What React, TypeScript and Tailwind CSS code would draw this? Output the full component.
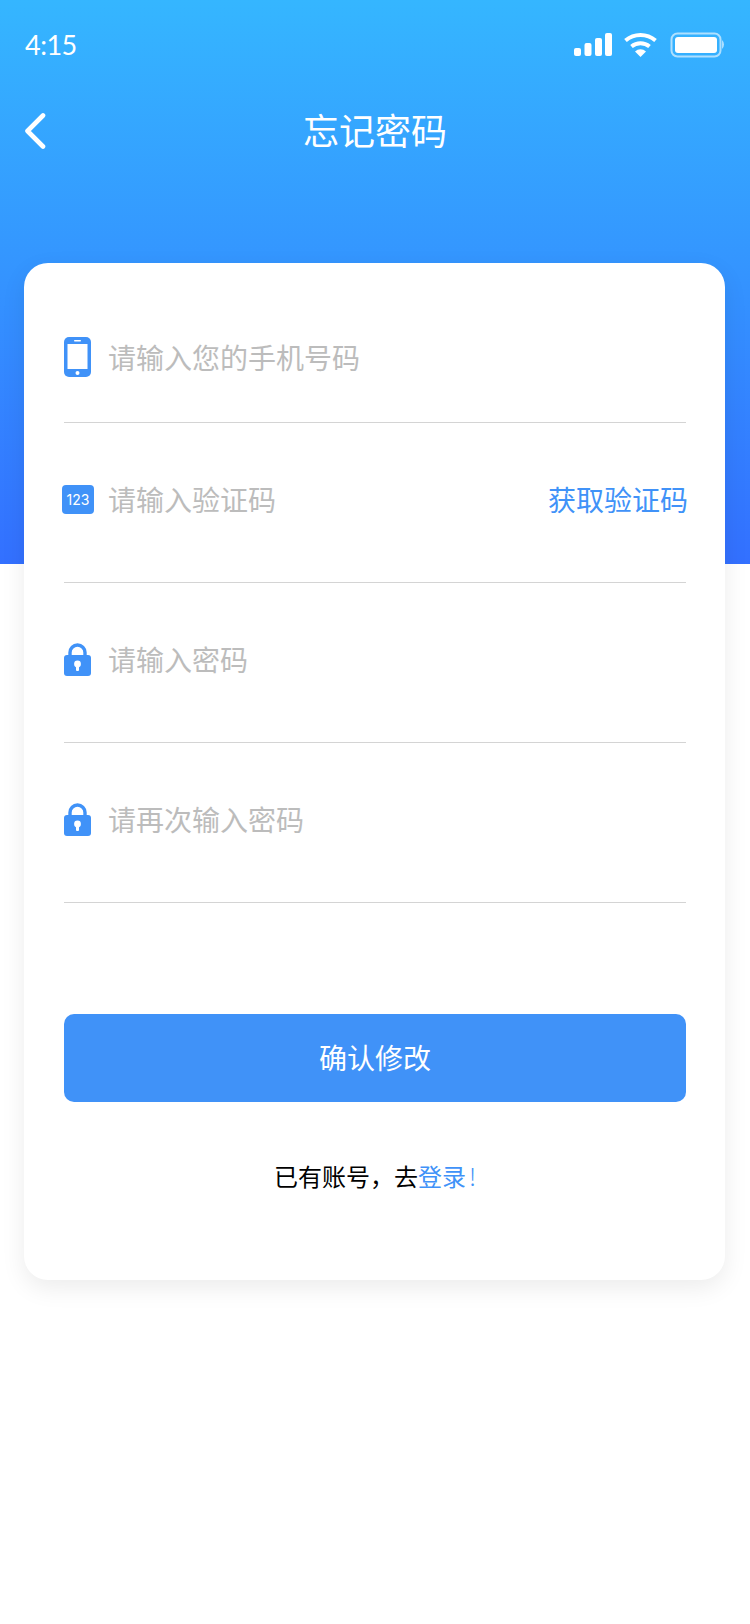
const cjk = "font-['Noto_Sans_CJK_SC',sans-serif]";

function PhoneIcon() {
    return (
        <svg width="28" height="40" viewBox="0 0 28 40" className="mt-[-1px]">
            <rect width="27" height="40" rx="5" fill="#4092f8" />
            <rect x="3.5" y="7" width="20" height="25" fill="#fff" />
            <rect x="10" y="3" width="7" height="1.5" rx="0.7" fill="#fff" />
            <circle cx="13.5" cy="36" r="2" fill="#fff" />
        </svg>
    );
}

function CodeIcon() {
    return (
        <div className="mt-[1px] flex h-[29px] w-[32px] items-center justify-center rounded-[4px] bg-[#4092f8] font-['Inter',sans-serif] text-[14px] text-white">
            123
        </div>
    );
}

function LockIcon() {
    return (
        <svg width="27" height="34" viewBox="0 0 27 34" className="mt-[1px]">
            <path d="M6 14V9.5a7.5 7.5 0 0 1 15 0V14" fill="none" stroke="#4092f8" strokeWidth="3.4" />
            <rect y="12" width="27" height="21" rx="3" fill="#4092f8" />
            <circle cx="13.5" cy="21" r="3.4" fill="#fff" />
            <rect x="12" y="22" width="3" height="6" rx="1" fill="#fff" />
        </svg>
    );
}

function Field({ icon, placeholder, action, pad }: { icon: React.ReactNode; placeholder: string; action?: string; pad: string }) {
    return (
        <div className={`flex h-[160px] items-start border-b border-[#d4d4d4] ${pad}`}>
            <div className="flex h-[40px] w-[44px] items-center">{icon}</div>
            <span className="text-[28px] leading-[40px] font-normal text-[#bcbcbc]">{placeholder}</span>
            {action && <span className="ml-auto mr-[-2px] text-[28px] leading-[40px] font-normal text-[#4092f8]">{action}</span>}
        </div>
    );
}

export default function App() {
    return (
        <div className={`relative min-h-[1624px] bg-white ${cjk}`}>
            <div className="h-[564px] bg-[linear-gradient(180deg,#35b6ff,#3370ff)] text-white">
                <div className="flex h-[90px] items-center justify-between px-[24px]">
                    <span className="ml-[1px] font-['Lato',sans-serif] text-[27px] tracking-[-0.5px]">4:15</span>
                    <svg width="152" height="28" viewBox="0 0 152 28" fill="#fff" className="mt-[-2px]">
                        <rect x="0" y="18" width="7" height="8" rx="2" />
                        <rect x="10.5" y="13" width="7" height="13" rx="2" />
                        <rect x="21" y="8" width="7" height="18" rx="2" />
                        <rect x="31" y="3" width="7" height="23" rx="2" />
                        <path d="M51.5 10.5A23 23 0 0 1 81.5 10.5" fill="none" stroke="#fff" strokeWidth="4" />
                        <path d="M57.5 16.5A14 14 0 0 1 75.5 16.5" fill="none" stroke="#fff" strokeWidth="4" />
                        <path d="M66.5 27l-5.5-5.5a8 8 0 0 1 11 0z" />
                        <rect x="97.5" y="3.5" width="49" height="23" rx="6" fill="none" stroke="#fff" strokeOpacity="0.6" strokeWidth="2" />
                        <rect x="101" y="7" width="42" height="16" rx="3" />
                        <path d="M148 10a6 6 0 0 1 0 9z" fillOpacity="0.6" />
                    </svg>
                </div>
                <div className="relative flex h-[82px] items-center justify-center">
                    <svg width="22" height="36" viewBox="0 0 22 36" className="absolute left-[24px] top-[23px]">
                        <path d="M19 2.5L3.5 18 19 33.5" fill="none" stroke="#fff" strokeWidth="4.6" strokeLinecap="round" strokeLinejoin="round" />
                    </svg>
                    <span className="mt-[-4px] text-[36px] leading-none font-normal">忘记密码</span>
                </div>
            </div>
            <div className="absolute left-[24px] top-[263px] h-[1017px] w-[701px] rounded-[24px] bg-white pl-[40px] pr-[39px] shadow-[0_8px_24px_rgba(0,0,0,0.08)]">
                <Field icon={<PhoneIcon />} placeholder="请输入您的手机号码" pad="pt-[74px]" />
                <Field icon={<div className="ml-[-2px]"><CodeIcon /></div>} placeholder="请输入验证码" action="获取验证码" pad="pt-[56px]" />
                <Field icon={<LockIcon />} placeholder="请输入密码" pad="pt-[56px]" />
                <Field icon={<LockIcon />} placeholder="请再次输入密码" pad="pt-[56px]" />
                <button className="mt-[111px] flex h-[88px] w-full items-center justify-center rounded-[10px] bg-[#4092f8] pb-[2px] text-[28px] font-normal text-white">
                    确认修改
                </button>
                <p className="mt-[56px] text-center text-[24px] leading-[36px] font-normal text-black">
                    已有账号，去<span className="text-[#4092f8]">登录<span className="ml-[3px] font-light">!</span></span>
                </p>
            </div>
        </div>
    );
}
